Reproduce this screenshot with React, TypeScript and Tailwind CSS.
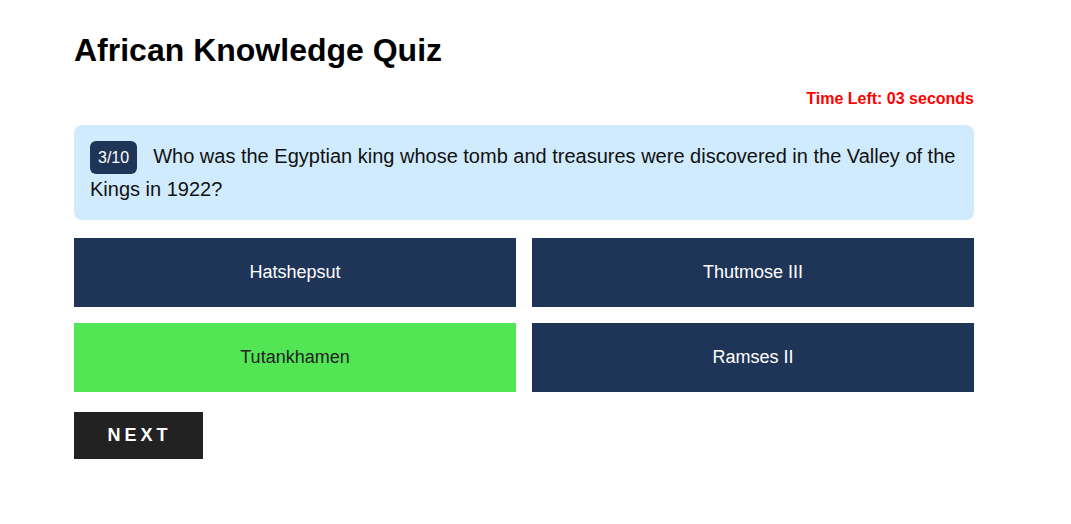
import React, { useState } from 'react';

const options = ['Hatshepsut', 'Thutmose III', 'Tutankhamen', 'Ramses II'];
const correct = 'Tutankhamen';

export default function App() {
  const [picked] = useState<string | null>('Tutankhamen');

  return (
    <div className="min-h-screen bg-white font-['Liberation_Sans',Arial,sans-serif] text-black">
      <div className="w-[900px] ml-[74px] pt-[26px]">
        <h1 className="text-[32px] leading-[48px] font-bold">African Knowledge Quiz</h1>

        <div className="mt-[13px] flex justify-end">
          <span className="text-[16px] leading-[24px] font-bold text-[#ff0000]">Time Left: 03 seconds</span>
        </div>

        {/* Question */}
        <div className="mt-[14px] rounded-lg bg-[#d0ebfd] px-4 pt-[16px] pb-[15px] text-[20px] leading-[31px] text-[#111]">
          <span className="inline-block mr-4 rounded-md bg-[#1f3557] px-2 py-[4px] text-[16px] leading-[25px] text-white align-middle">
            3/10
          </span>
          Who was the Egyptian king whose tomb and treasures were discovered in the Valley of the Kings in 1922?
        </div>

        {/* Answers */}
        <div className="mt-[18px] grid grid-cols-2 gap-4">
          {options.map((opt) => {
            const isRight = picked !== null && opt === correct;
            return (
              <button
                key={opt}
                className={`h-[69px] text-[18px] ${
                  isRight ? 'bg-[#52e655] text-[#222]' : 'bg-[#1f3557] text-white'
                }`}
              >
                {opt}
              </button>
            );
          })}
        </div>

        <button className="mt-[20px] h-[47px] w-[129px] bg-[#222] text-white text-[18px] font-bold tracking-[4px] pl-[2px]">
          NEXT
        </button>
      </div>
    </div>
  );
}
